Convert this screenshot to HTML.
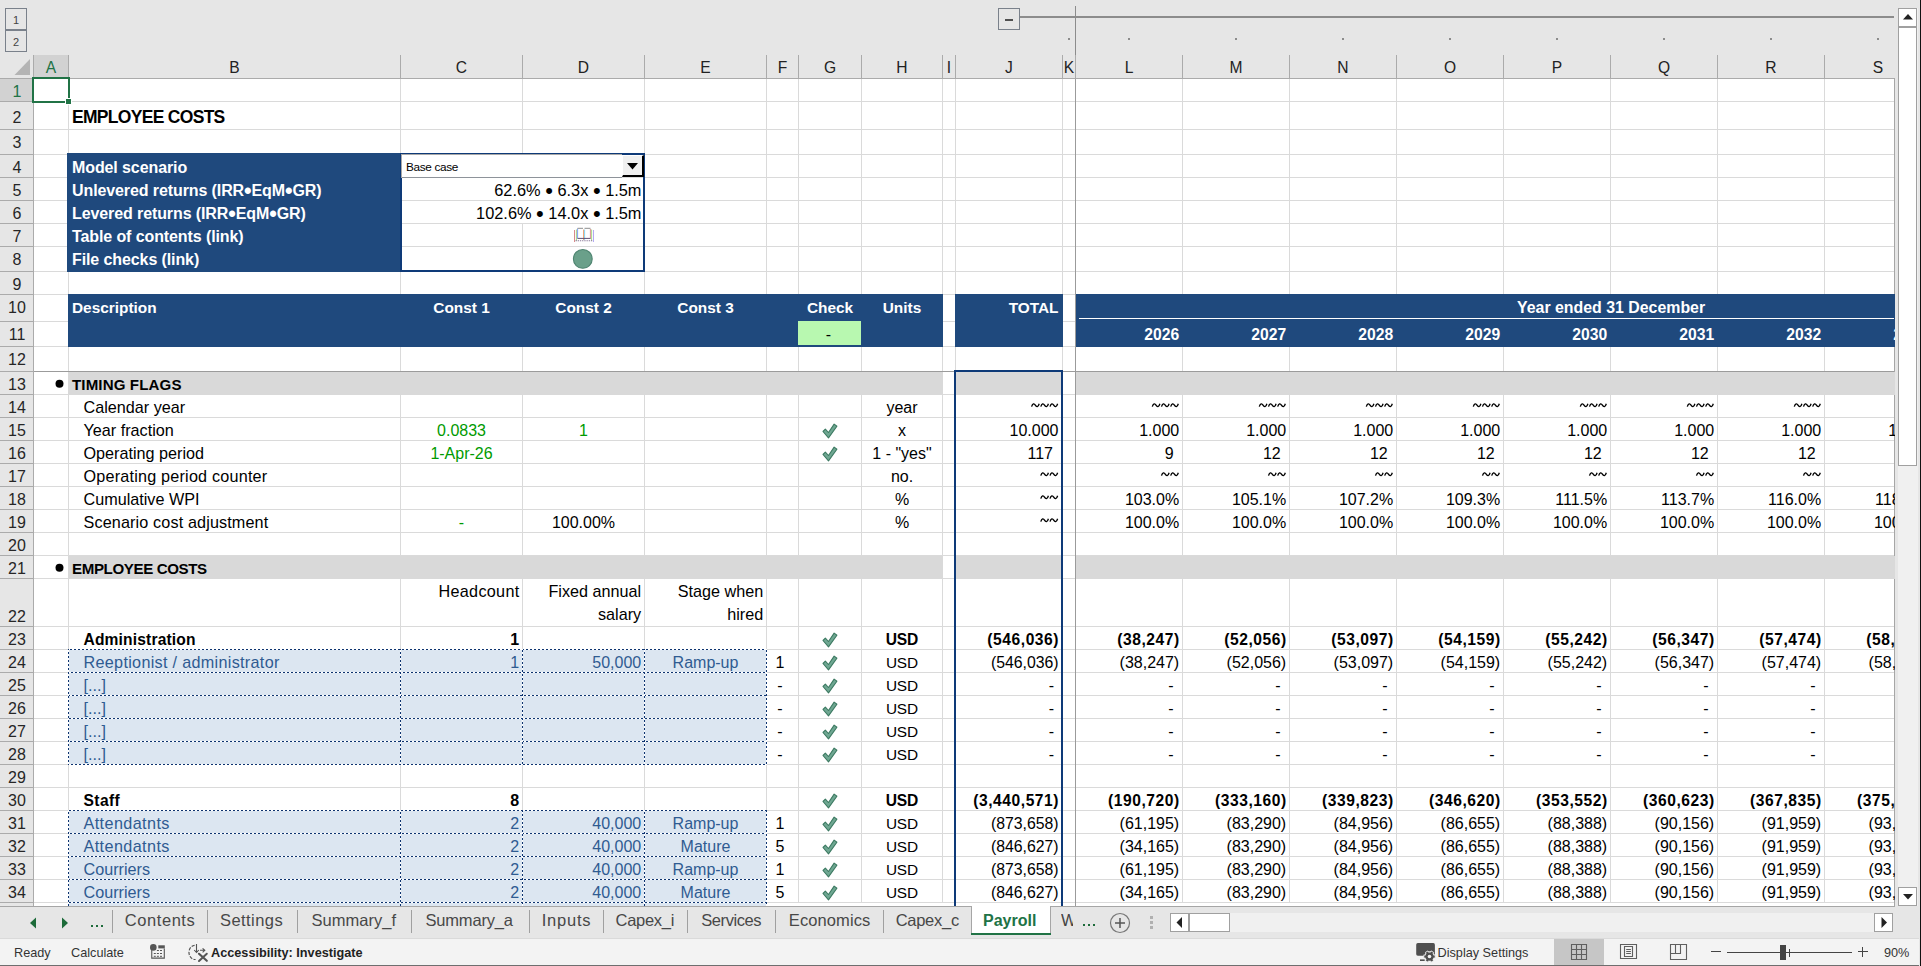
<!DOCTYPE html><html><head><meta charset="utf-8"><style>
html,body{margin:0;padding:0;}body{width:1921px;height:966px;overflow:hidden;position:relative;background:#E6E6E6;font-family:"Liberation Sans", sans-serif;}
div{position:absolute;box-sizing:border-box;}
.t{white-space:pre;}
</style></head><body>
<div style="left:5px;top:8px;width:22px;height:22px;border:1px solid #7A818B;"></div>
<div class="t" style="left:-284px;width:600px;text-align:center;top:14px;font-size:11px;line-height:13px;font-weight:400;color:#444;">1</div>
<div style="left:5px;top:30px;width:22px;height:22px;border:1px solid #7A818B;"></div>
<div class="t" style="left:-284px;width:600px;text-align:center;top:36px;font-size:11px;line-height:13px;font-weight:400;color:#444;">2</div>
<div style="left:5px;top:29px;width:22px;height:2px;background:#7A818B;"></div>
<div style="left:998px;top:8px;width:22px;height:22px;border:1px solid #7A818B;"></div>
<div style="left:1005px;top:19px;width:8px;height:2px;background:#505050;"></div>
<div style="left:1020px;top:16px;width:874px;height:2px;background:#8C8C8C;"></div>
<div style="left:1075px;top:6px;width:1px;height:49px;background:#8C8C8C;"></div>
<div style="left:1068px;top:38px;width:2px;height:2px;background:#8C8C8C;"></div>
<div style="left:1128px;top:38px;width:2px;height:2px;background:#8C8C8C;"></div>
<div style="left:1235px;top:38px;width:2px;height:2px;background:#8C8C8C;"></div>
<div style="left:1342px;top:38px;width:2px;height:2px;background:#8C8C8C;"></div>
<div style="left:1449px;top:38px;width:2px;height:2px;background:#8C8C8C;"></div>
<div style="left:1556px;top:38px;width:2px;height:2px;background:#8C8C8C;"></div>
<div style="left:1663px;top:38px;width:2px;height:2px;background:#8C8C8C;"></div>
<div style="left:1770px;top:38px;width:2px;height:2px;background:#8C8C8C;"></div>
<div style="left:1877px;top:38px;width:2px;height:2px;background:#8C8C8C;"></div>
<div style="left:0px;top:55px;width:1894px;height:24px;background:#E6E6E6;"></div>
<svg style="position:absolute;left:0;top:55px" width="33" height="23"><polygon points="14.5,20 30,4 30,20" fill="#B4B4B4"/></svg>
<div style="left:34px;top:55px;width:35px;height:23px;background:#D2D2D2;"></div>
<div style="left:68px;top:55px;width:1px;height:23px;background:#ABABAB;"></div>
<div class="t" style="left:-249.0px;width:600px;text-align:center;top:58px;font-size:15.6px;line-height:19px;font-weight:400;color:#217346;">A</div>
<div style="left:400px;top:55px;width:1px;height:23px;background:#ABABAB;"></div>
<div class="t" style="left:-65.5px;width:600px;text-align:center;top:58px;font-size:15.6px;line-height:19px;font-weight:400;color:#222;">B</div>
<div style="left:522px;top:55px;width:1px;height:23px;background:#ABABAB;"></div>
<div class="t" style="left:161.5px;width:600px;text-align:center;top:58px;font-size:15.6px;line-height:19px;font-weight:400;color:#222;">C</div>
<div style="left:644px;top:55px;width:1px;height:23px;background:#ABABAB;"></div>
<div class="t" style="left:283.5px;width:600px;text-align:center;top:58px;font-size:15.6px;line-height:19px;font-weight:400;color:#222;">D</div>
<div style="left:766px;top:55px;width:1px;height:23px;background:#ABABAB;"></div>
<div class="t" style="left:405.5px;width:600px;text-align:center;top:58px;font-size:15.6px;line-height:19px;font-weight:400;color:#222;">E</div>
<div style="left:798px;top:55px;width:1px;height:23px;background:#ABABAB;"></div>
<div class="t" style="left:482.5px;width:600px;text-align:center;top:58px;font-size:15.6px;line-height:19px;font-weight:400;color:#222;">F</div>
<div style="left:861px;top:55px;width:1px;height:23px;background:#ABABAB;"></div>
<div class="t" style="left:530.0px;width:600px;text-align:center;top:58px;font-size:15.6px;line-height:19px;font-weight:400;color:#222;">G</div>
<div style="left:942px;top:55px;width:1px;height:23px;background:#ABABAB;"></div>
<div class="t" style="left:602.0px;width:600px;text-align:center;top:58px;font-size:15.6px;line-height:19px;font-weight:400;color:#222;">H</div>
<div style="left:955px;top:55px;width:1px;height:23px;background:#ABABAB;"></div>
<div class="t" style="left:649.0px;width:600px;text-align:center;top:58px;font-size:15.6px;line-height:19px;font-weight:400;color:#222;">I</div>
<div style="left:1062px;top:55px;width:1px;height:23px;background:#ABABAB;"></div>
<div class="t" style="left:709.0px;width:600px;text-align:center;top:58px;font-size:15.6px;line-height:19px;font-weight:400;color:#222;">J</div>
<div style="left:1075px;top:55px;width:1px;height:23px;background:#ABABAB;"></div>
<div class="t" style="left:769.0px;width:600px;text-align:center;top:58px;font-size:15.6px;line-height:19px;font-weight:400;color:#222;">K</div>
<div style="left:1182px;top:55px;width:1px;height:23px;background:#ABABAB;"></div>
<div class="t" style="left:829.0px;width:600px;text-align:center;top:58px;font-size:15.6px;line-height:19px;font-weight:400;color:#222;">L</div>
<div style="left:1289px;top:55px;width:1px;height:23px;background:#ABABAB;"></div>
<div class="t" style="left:936.0px;width:600px;text-align:center;top:58px;font-size:15.6px;line-height:19px;font-weight:400;color:#222;">M</div>
<div style="left:1396px;top:55px;width:1px;height:23px;background:#ABABAB;"></div>
<div class="t" style="left:1043.0px;width:600px;text-align:center;top:58px;font-size:15.6px;line-height:19px;font-weight:400;color:#222;">N</div>
<div style="left:1503px;top:55px;width:1px;height:23px;background:#ABABAB;"></div>
<div class="t" style="left:1150.0px;width:600px;text-align:center;top:58px;font-size:15.6px;line-height:19px;font-weight:400;color:#222;">O</div>
<div style="left:1610px;top:55px;width:1px;height:23px;background:#ABABAB;"></div>
<div class="t" style="left:1257.0px;width:600px;text-align:center;top:58px;font-size:15.6px;line-height:19px;font-weight:400;color:#222;">P</div>
<div style="left:1717px;top:55px;width:1px;height:23px;background:#ABABAB;"></div>
<div class="t" style="left:1364.0px;width:600px;text-align:center;top:58px;font-size:15.6px;line-height:19px;font-weight:400;color:#222;">Q</div>
<div style="left:1824px;top:55px;width:1px;height:23px;background:#ABABAB;"></div>
<div class="t" style="left:1471.0px;width:600px;text-align:center;top:58px;font-size:15.6px;line-height:19px;font-weight:400;color:#222;">R</div>
<div style="left:1931px;top:55px;width:1px;height:23px;background:#ABABAB;"></div>
<div class="t" style="left:1578.0px;width:600px;text-align:center;top:58px;font-size:15.6px;line-height:19px;font-weight:400;color:#222;">S</div>
<div style="left:33px;top:55px;width:1px;height:23px;background:#ABABAB;"></div>
<div style="left:0px;top:78px;width:1894px;height:1px;background:#ABABAB;"></div>
<div style="left:0px;top:79px;width:33px;height:827px;background:#E6E6E6;"></div>
<div style="left:0px;top:79px;width:33px;height:22px;background:#D2D2D2;"></div>
<div style="left:0px;top:101px;width:33px;height:1px;background:#ABABAB;"></div>
<div class="t" style="left:-283px;width:600px;text-align:center;top:82px;font-size:16px;line-height:19px;font-weight:400;color:#217346;">1</div>
<div style="left:0px;top:129px;width:33px;height:1px;background:#ABABAB;"></div>
<div class="t" style="left:-283px;width:600px;text-align:center;top:108px;font-size:16px;line-height:19px;font-weight:400;color:#262626;">2</div>
<div style="left:0px;top:154px;width:33px;height:1px;background:#ABABAB;"></div>
<div class="t" style="left:-283px;width:600px;text-align:center;top:133px;font-size:16px;line-height:19px;font-weight:400;color:#262626;">3</div>
<div style="left:0px;top:177px;width:33px;height:1px;background:#ABABAB;"></div>
<div class="t" style="left:-283px;width:600px;text-align:center;top:158px;font-size:16px;line-height:19px;font-weight:400;color:#262626;">4</div>
<div style="left:0px;top:200px;width:33px;height:1px;background:#ABABAB;"></div>
<div class="t" style="left:-283px;width:600px;text-align:center;top:181px;font-size:16px;line-height:19px;font-weight:400;color:#262626;">5</div>
<div style="left:0px;top:223px;width:33px;height:1px;background:#ABABAB;"></div>
<div class="t" style="left:-283px;width:600px;text-align:center;top:204px;font-size:16px;line-height:19px;font-weight:400;color:#262626;">6</div>
<div style="left:0px;top:246px;width:33px;height:1px;background:#ABABAB;"></div>
<div class="t" style="left:-283px;width:600px;text-align:center;top:227px;font-size:16px;line-height:19px;font-weight:400;color:#262626;">7</div>
<div style="left:0px;top:271px;width:33px;height:1px;background:#ABABAB;"></div>
<div class="t" style="left:-283px;width:600px;text-align:center;top:250px;font-size:16px;line-height:19px;font-weight:400;color:#262626;">8</div>
<div style="left:0px;top:294px;width:33px;height:1px;background:#ABABAB;"></div>
<div class="t" style="left:-283px;width:600px;text-align:center;top:275px;font-size:16px;line-height:19px;font-weight:400;color:#262626;">9</div>
<div style="left:0px;top:321px;width:33px;height:1px;background:#ABABAB;"></div>
<div class="t" style="left:-283px;width:600px;text-align:center;top:298px;font-size:16px;line-height:19px;font-weight:400;color:#262626;">10</div>
<div style="left:0px;top:346px;width:33px;height:1px;background:#ABABAB;"></div>
<div class="t" style="left:-283px;width:600px;text-align:center;top:325px;font-size:16px;line-height:19px;font-weight:400;color:#262626;">11</div>
<div style="left:0px;top:371px;width:33px;height:1px;background:#ABABAB;"></div>
<div class="t" style="left:-283px;width:600px;text-align:center;top:350px;font-size:16px;line-height:19px;font-weight:400;color:#262626;">12</div>
<div style="left:0px;top:394px;width:33px;height:1px;background:#ABABAB;"></div>
<div class="t" style="left:-283px;width:600px;text-align:center;top:375px;font-size:16px;line-height:19px;font-weight:400;color:#262626;">13</div>
<div style="left:0px;top:417px;width:33px;height:1px;background:#ABABAB;"></div>
<div class="t" style="left:-283px;width:600px;text-align:center;top:398px;font-size:16px;line-height:19px;font-weight:400;color:#262626;">14</div>
<div style="left:0px;top:440px;width:33px;height:1px;background:#ABABAB;"></div>
<div class="t" style="left:-283px;width:600px;text-align:center;top:421px;font-size:16px;line-height:19px;font-weight:400;color:#262626;">15</div>
<div style="left:0px;top:463px;width:33px;height:1px;background:#ABABAB;"></div>
<div class="t" style="left:-283px;width:600px;text-align:center;top:444px;font-size:16px;line-height:19px;font-weight:400;color:#262626;">16</div>
<div style="left:0px;top:486px;width:33px;height:1px;background:#ABABAB;"></div>
<div class="t" style="left:-283px;width:600px;text-align:center;top:467px;font-size:16px;line-height:19px;font-weight:400;color:#262626;">17</div>
<div style="left:0px;top:509px;width:33px;height:1px;background:#ABABAB;"></div>
<div class="t" style="left:-283px;width:600px;text-align:center;top:490px;font-size:16px;line-height:19px;font-weight:400;color:#262626;">18</div>
<div style="left:0px;top:532px;width:33px;height:1px;background:#ABABAB;"></div>
<div class="t" style="left:-283px;width:600px;text-align:center;top:513px;font-size:16px;line-height:19px;font-weight:400;color:#262626;">19</div>
<div style="left:0px;top:555px;width:33px;height:1px;background:#ABABAB;"></div>
<div class="t" style="left:-283px;width:600px;text-align:center;top:536px;font-size:16px;line-height:19px;font-weight:400;color:#262626;">20</div>
<div style="left:0px;top:578px;width:33px;height:1px;background:#ABABAB;"></div>
<div class="t" style="left:-283px;width:600px;text-align:center;top:559px;font-size:16px;line-height:19px;font-weight:400;color:#262626;">21</div>
<div style="left:0px;top:626px;width:33px;height:1px;background:#ABABAB;"></div>
<div class="t" style="left:-283px;width:600px;text-align:center;top:607px;font-size:16px;line-height:19px;font-weight:400;color:#262626;">22</div>
<div style="left:0px;top:649px;width:33px;height:1px;background:#ABABAB;"></div>
<div class="t" style="left:-283px;width:600px;text-align:center;top:630px;font-size:16px;line-height:19px;font-weight:400;color:#262626;">23</div>
<div style="left:0px;top:672px;width:33px;height:1px;background:#ABABAB;"></div>
<div class="t" style="left:-283px;width:600px;text-align:center;top:653px;font-size:16px;line-height:19px;font-weight:400;color:#262626;">24</div>
<div style="left:0px;top:695px;width:33px;height:1px;background:#ABABAB;"></div>
<div class="t" style="left:-283px;width:600px;text-align:center;top:676px;font-size:16px;line-height:19px;font-weight:400;color:#262626;">25</div>
<div style="left:0px;top:718px;width:33px;height:1px;background:#ABABAB;"></div>
<div class="t" style="left:-283px;width:600px;text-align:center;top:699px;font-size:16px;line-height:19px;font-weight:400;color:#262626;">26</div>
<div style="left:0px;top:741px;width:33px;height:1px;background:#ABABAB;"></div>
<div class="t" style="left:-283px;width:600px;text-align:center;top:722px;font-size:16px;line-height:19px;font-weight:400;color:#262626;">27</div>
<div style="left:0px;top:764px;width:33px;height:1px;background:#ABABAB;"></div>
<div class="t" style="left:-283px;width:600px;text-align:center;top:745px;font-size:16px;line-height:19px;font-weight:400;color:#262626;">28</div>
<div style="left:0px;top:787px;width:33px;height:1px;background:#ABABAB;"></div>
<div class="t" style="left:-283px;width:600px;text-align:center;top:768px;font-size:16px;line-height:19px;font-weight:400;color:#262626;">29</div>
<div style="left:0px;top:810px;width:33px;height:1px;background:#ABABAB;"></div>
<div class="t" style="left:-283px;width:600px;text-align:center;top:791px;font-size:16px;line-height:19px;font-weight:400;color:#262626;">30</div>
<div style="left:0px;top:833px;width:33px;height:1px;background:#ABABAB;"></div>
<div class="t" style="left:-283px;width:600px;text-align:center;top:814px;font-size:16px;line-height:19px;font-weight:400;color:#262626;">31</div>
<div style="left:0px;top:856px;width:33px;height:1px;background:#ABABAB;"></div>
<div class="t" style="left:-283px;width:600px;text-align:center;top:837px;font-size:16px;line-height:19px;font-weight:400;color:#262626;">32</div>
<div style="left:0px;top:879px;width:33px;height:1px;background:#ABABAB;"></div>
<div class="t" style="left:-283px;width:600px;text-align:center;top:860px;font-size:16px;line-height:19px;font-weight:400;color:#262626;">33</div>
<div style="left:0px;top:902px;width:33px;height:1px;background:#ABABAB;"></div>
<div class="t" style="left:-283px;width:600px;text-align:center;top:883px;font-size:16px;line-height:19px;font-weight:400;color:#262626;">34</div>
<div style="left:33px;top:55px;width:1px;height:851px;background:#ABABAB;"></div>
<div style="left:34px;top:79px;width:1860px;height:827px;background:#FFFFFF;"></div>
<div style="left:68px;top:79px;width:1px;height:827px;background:#DADADA;"></div>
<div style="left:400px;top:79px;width:1px;height:827px;background:#DADADA;"></div>
<div style="left:522px;top:79px;width:1px;height:827px;background:#DADADA;"></div>
<div style="left:644px;top:79px;width:1px;height:827px;background:#DADADA;"></div>
<div style="left:766px;top:79px;width:1px;height:827px;background:#DADADA;"></div>
<div style="left:798px;top:79px;width:1px;height:827px;background:#DADADA;"></div>
<div style="left:861px;top:79px;width:1px;height:827px;background:#DADADA;"></div>
<div style="left:942px;top:79px;width:1px;height:827px;background:#DADADA;"></div>
<div style="left:955px;top:79px;width:1px;height:827px;background:#DADADA;"></div>
<div style="left:1062px;top:79px;width:1px;height:827px;background:#DADADA;"></div>
<div style="left:1075px;top:79px;width:1px;height:827px;background:#DADADA;"></div>
<div style="left:1182px;top:79px;width:1px;height:827px;background:#DADADA;"></div>
<div style="left:1289px;top:79px;width:1px;height:827px;background:#DADADA;"></div>
<div style="left:1396px;top:79px;width:1px;height:827px;background:#DADADA;"></div>
<div style="left:1503px;top:79px;width:1px;height:827px;background:#DADADA;"></div>
<div style="left:1610px;top:79px;width:1px;height:827px;background:#DADADA;"></div>
<div style="left:1717px;top:79px;width:1px;height:827px;background:#DADADA;"></div>
<div style="left:1824px;top:79px;width:1px;height:827px;background:#DADADA;"></div>
<div style="left:34px;top:101px;width:1860px;height:1px;background:#DADADA;"></div>
<div style="left:34px;top:129px;width:1860px;height:1px;background:#DADADA;"></div>
<div style="left:34px;top:154px;width:1860px;height:1px;background:#DADADA;"></div>
<div style="left:34px;top:177px;width:1860px;height:1px;background:#DADADA;"></div>
<div style="left:34px;top:200px;width:1860px;height:1px;background:#DADADA;"></div>
<div style="left:34px;top:223px;width:1860px;height:1px;background:#DADADA;"></div>
<div style="left:34px;top:246px;width:1860px;height:1px;background:#DADADA;"></div>
<div style="left:34px;top:271px;width:1860px;height:1px;background:#DADADA;"></div>
<div style="left:34px;top:294px;width:1860px;height:1px;background:#DADADA;"></div>
<div style="left:34px;top:321px;width:1860px;height:1px;background:#DADADA;"></div>
<div style="left:34px;top:346px;width:1860px;height:1px;background:#DADADA;"></div>
<div style="left:34px;top:371px;width:1860px;height:1px;background:#DADADA;"></div>
<div style="left:34px;top:394px;width:1860px;height:1px;background:#DADADA;"></div>
<div style="left:34px;top:417px;width:1860px;height:1px;background:#DADADA;"></div>
<div style="left:34px;top:440px;width:1860px;height:1px;background:#DADADA;"></div>
<div style="left:34px;top:463px;width:1860px;height:1px;background:#DADADA;"></div>
<div style="left:34px;top:486px;width:1860px;height:1px;background:#DADADA;"></div>
<div style="left:34px;top:509px;width:1860px;height:1px;background:#DADADA;"></div>
<div style="left:34px;top:532px;width:1860px;height:1px;background:#DADADA;"></div>
<div style="left:34px;top:555px;width:1860px;height:1px;background:#DADADA;"></div>
<div style="left:34px;top:578px;width:1860px;height:1px;background:#DADADA;"></div>
<div style="left:34px;top:626px;width:1860px;height:1px;background:#DADADA;"></div>
<div style="left:34px;top:649px;width:1860px;height:1px;background:#DADADA;"></div>
<div style="left:34px;top:672px;width:1860px;height:1px;background:#DADADA;"></div>
<div style="left:34px;top:695px;width:1860px;height:1px;background:#DADADA;"></div>
<div style="left:34px;top:718px;width:1860px;height:1px;background:#DADADA;"></div>
<div style="left:34px;top:741px;width:1860px;height:1px;background:#DADADA;"></div>
<div style="left:34px;top:764px;width:1860px;height:1px;background:#DADADA;"></div>
<div style="left:34px;top:787px;width:1860px;height:1px;background:#DADADA;"></div>
<div style="left:34px;top:810px;width:1860px;height:1px;background:#DADADA;"></div>
<div style="left:34px;top:833px;width:1860px;height:1px;background:#DADADA;"></div>
<div style="left:34px;top:856px;width:1860px;height:1px;background:#DADADA;"></div>
<div style="left:34px;top:879px;width:1860px;height:1px;background:#DADADA;"></div>
<div style="left:34px;top:902px;width:1860px;height:1px;background:#DADADA;"></div>
<div style="left:34px;top:903px;width:1860px;height:3px;background:#FFFFFF;"></div>
<div style="left:1894px;top:78px;width:1px;height:829px;background:#A6A6A6;"></div>
<div style="left:0px;top:906px;width:1894px;height:1px;background:#A6A6A6;"></div>
<!--CELLS-->
<div class="t" style="left:72px;top:107px;font-size:17.5px;line-height:21px;font-weight:700;color:#000;letter-spacing:-0.7px;">EMPLOYEE COSTS</div>
<div style="left:67px;top:153px;width:334px;height:119px;background:#1F497D;"></div>
<div class="t" style="left:72px;top:157.5px;font-size:16px;line-height:19px;font-weight:700;color:#FFF;letter-spacing:-0.1px;">Model scenario</div>
<div class="t" style="left:72px;top:180.5px;font-size:16px;line-height:19px;font-weight:700;color:#FFF;letter-spacing:-0.1px;">Unlevered returns (IRR<span style="font-size:1.35em;line-height:0;vertical-align:-0.08em">•</span>EqM<span style="font-size:1.35em;line-height:0;vertical-align:-0.08em">•</span>GR)</div>
<div class="t" style="left:72px;top:203.5px;font-size:16px;line-height:19px;font-weight:700;color:#FFF;letter-spacing:-0.1px;">Levered returns (IRR<span style="font-size:1.35em;line-height:0;vertical-align:-0.08em">•</span>EqM<span style="font-size:1.35em;line-height:0;vertical-align:-0.08em">•</span>GR)</div>
<div class="t" style="left:72px;top:226.5px;font-size:16px;line-height:19px;font-weight:700;color:#FFF;letter-spacing:-0.1px;">Table of contents (link)</div>
<div class="t" style="left:72px;top:250px;font-size:16px;line-height:19px;font-weight:700;color:#FFF;letter-spacing:-0.1px;">File checks (link)</div>
<div style="left:401px;top:154px;width:243px;height:117px;background:#FFFFFF;"></div>
<div style="left:401px;top:177px;width:243px;height:1px;background:#DADADA;"></div>
<div style="left:401px;top:200px;width:243px;height:1px;background:#DADADA;"></div>
<div style="left:401px;top:223px;width:243px;height:1px;background:#DADADA;"></div>
<div style="left:401px;top:246px;width:243px;height:1px;background:#DADADA;"></div>
<div style="left:522px;top:224px;width:1px;height:47px;background:#DADADA;"></div>
<div style="left:400px;top:153px;width:245px;height:119px;border:2px solid #0E3A78;"></div>
<div style="left:401px;top:177px;width:221px;height:1px;background:#8E939A;"></div>
<div style="left:401px;top:154px;width:221px;height:1px;background:#A8A8A8;"></div>
<div style="left:401px;top:154px;width:1px;height:24px;background:#A8A8A8;"></div>
<div style="left:622px;top:155px;width:22px;height:22px;background:#F0F0F0;border-top:1px solid #FFF;border-left:1px solid #FFF;border-right:2px solid #000;border-bottom:2px solid #000;"></div>
<svg style="position:absolute;left:627px;top:163px" width="12" height="8"><polygon points="0,0 11,0 5.5,6.5" fill="#000"/></svg>
<div class="t" style="left:406px;top:160px;font-size:11.8px;line-height:14px;font-weight:400;color:#000;letter-spacing:-0.35px;">Base case</div>
<div class="t" style="left:41.5px;width:600px;text-align:right;top:180px;font-size:16.35px;line-height:20px;font-weight:400;color:#000;">62.6% <span style="font-size:1.35em;line-height:0;vertical-align:-0.08em">•</span> 6.3x <span style="font-size:1.35em;line-height:0;vertical-align:-0.08em">•</span> 1.5m</div>
<div class="t" style="left:41.5px;width:600px;text-align:right;top:203px;font-size:16.35px;line-height:20px;font-weight:400;color:#000;">102.6% <span style="font-size:1.35em;line-height:0;vertical-align:-0.08em">•</span> 14.0x <span style="font-size:1.35em;line-height:0;vertical-align:-0.08em">•</span> 1.5m</div>
<svg style="position:absolute;left:568px;top:224px" width="30" height="22" viewBox="0 0 30 22"><path d="M6.5 6 V18" stroke="#D98A8A" stroke-width="1"/><path d="M8.4 5.5 V17" stroke="#A9CF86" stroke-width="1"/><path d="M9.6 4.5 V14.5" stroke="#7FA0F5" stroke-width="1"/><path d="M9.5 4.3 H15" stroke="#8C8C8C" stroke-width="1"/><path d="M16.5 4.3 H22.5" stroke="#8C8C8C" stroke-width="1"/><path d="M15.5 5.5 V16" stroke="#F2A878" stroke-width="1"/><path d="M16.6 5.5 V16" stroke="#7FD6F5" stroke-width="1"/><path d="M22.4 5 V14.5" stroke="#DF8E96" stroke-width="1"/><path d="M23.6 5.5 V17" stroke="#A9D98C" stroke-width="1"/><path d="M25.5 6 V18" stroke="#B5AAF5" stroke-width="1"/><path d="M9.5 14.4 H22.5" stroke="#5E4F70" stroke-width="1"/><path d="M7.5 16.8 H24.5" stroke="#8A7A9A" stroke-width="1.1" stroke-dasharray="1.3 0.9"/></svg>
<svg style="position:absolute;left:572px;top:248px" width="22" height="22"><circle cx="10.8" cy="10.9" r="9.4" fill="#6AA08A" stroke="#4E8470" stroke-width="1.1"/></svg>
<div style="left:68px;top:294px;width:875px;height:53px;background:#1F497D;"></div>
<div style="left:955px;top:294px;width:108px;height:53px;background:#1F497D;"></div>
<div style="left:1076px;top:294px;width:819px;height:53px;background:#1F497D;"></div>
<div style="left:1079px;top:318px;width:815px;height:1px;background:#FFFFFF;"></div>
<div class="t" style="left:72px;top:299px;font-size:15.4px;line-height:18px;font-weight:700;color:#FFF;">Description</div>
<div class="t" style="left:161.5px;width:600px;text-align:center;top:299px;font-size:15.4px;line-height:18px;font-weight:700;color:#FFF;">Const 1</div>
<div class="t" style="left:283.5px;width:600px;text-align:center;top:299px;font-size:15.4px;line-height:18px;font-weight:700;color:#FFF;">Const 2</div>
<div class="t" style="left:405.5px;width:600px;text-align:center;top:299px;font-size:15.4px;line-height:18px;font-weight:700;color:#FFF;">Const 3</div>
<div class="t" style="left:530.0px;width:600px;text-align:center;top:299px;font-size:15.4px;line-height:18px;font-weight:700;color:#FFF;">Check</div>
<div class="t" style="left:602.0px;width:600px;text-align:center;top:299px;font-size:15.4px;line-height:18px;font-weight:700;color:#FFF;">Units</div>
<div class="t" style="left:458.5px;width:600px;text-align:right;top:299px;font-size:15.4px;line-height:18px;font-weight:700;color:#FFF;">TOTAL</div>
<div class="t" style="left:1517px;top:298px;font-size:15.9px;line-height:19px;font-weight:700;color:#FFF;">Year ended 31 December</div>
<div class="t" style="left:579.2px;width:600px;text-align:right;top:325px;font-size:15.7px;line-height:19px;font-weight:700;color:#FFF;">2026</div>
<div class="t" style="left:686.2px;width:600px;text-align:right;top:325px;font-size:15.7px;line-height:19px;font-weight:700;color:#FFF;">2027</div>
<div class="t" style="left:793.2px;width:600px;text-align:right;top:325px;font-size:15.7px;line-height:19px;font-weight:700;color:#FFF;">2028</div>
<div class="t" style="left:900.2px;width:600px;text-align:right;top:325px;font-size:15.7px;line-height:19px;font-weight:700;color:#FFF;">2029</div>
<div class="t" style="left:1007.2px;width:600px;text-align:right;top:325px;font-size:15.7px;line-height:19px;font-weight:700;color:#FFF;">2030</div>
<div class="t" style="left:1114.2px;width:600px;text-align:right;top:325px;font-size:15.7px;line-height:19px;font-weight:700;color:#FFF;">2031</div>
<div class="t" style="left:1221.2px;width:600px;text-align:right;top:325px;font-size:15.7px;line-height:19px;font-weight:700;color:#FFF;">2032</div>
<div class="t" style="left:1328.2px;width:600px;text-align:right;top:325px;font-size:15.7px;line-height:19px;font-weight:700;color:#FFF;">2033</div>
<div style="left:798px;top:321px;width:63px;height:24px;background:#B8F8B0;"></div>
<div class="t" style="left:528.4px;width:600px;text-align:center;top:325px;font-size:16px;line-height:19px;font-weight:400;color:#000;">-</div>
<div style="left:68px;top:372px;width:875px;height:23px;background:#D9D9D9;"></div>
<div style="left:955px;top:372px;width:108px;height:23px;background:#D9D9D9;"></div>
<div style="left:1076px;top:372px;width:819px;height:23px;background:#D9D9D9;"></div>
<div style="left:68px;top:556px;width:875px;height:23px;background:#D9D9D9;"></div>
<div style="left:955px;top:556px;width:108px;height:23px;background:#D9D9D9;"></div>
<div style="left:1076px;top:556px;width:819px;height:23px;background:#D9D9D9;"></div>
<div class="t" style="left:72px;top:376px;font-size:15.1px;line-height:18px;font-weight:700;color:#000;letter-spacing:0.12px;">TIMING FLAGS</div>
<div class="t" style="left:72px;top:560px;font-size:15.1px;line-height:18px;font-weight:700;color:#000;letter-spacing:-0.38px;">EMPLOYEE COSTS</div>
<svg style="position:absolute;left:55px;top:379px" width="10" height="10"><circle cx="4.5" cy="4.8" r="4" fill="#000"/></svg>
<svg style="position:absolute;left:55px;top:563px" width="10" height="10"><circle cx="4.5" cy="4.8" r="4" fill="#000"/></svg>
<div style="left:34px;top:371px;width:1860px;height:1px;background:#9B9B9B;"></div>
<div style="left:1075px;top:79px;width:1px;height:827px;background:#9B9B9B;"></div>
<div style="left:954px;top:370px;width:2px;height:536px;background:#0E3A78;"></div>
<div style="left:1061px;top:370px;width:2px;height:536px;background:#0E3A78;"></div>
<div style="left:954px;top:370px;width:109px;height:2px;background:#0E3A78;"></div>
<div class="t" style="left:83.5px;top:398px;font-size:16.2px;line-height:19px;font-weight:400;color:#000;">Calendar year</div>
<div class="t" style="left:83.5px;top:421px;font-size:16.2px;line-height:19px;font-weight:400;color:#000;">Year fraction</div>
<div class="t" style="left:83.5px;top:444px;font-size:16.2px;line-height:19px;font-weight:400;color:#000;">Operating period</div>
<div class="t" style="left:83.5px;top:467px;font-size:16.2px;line-height:19px;font-weight:400;color:#000;letter-spacing:0.2px;">Operating period counter</div>
<div class="t" style="left:83.5px;top:490px;font-size:16.2px;line-height:19px;font-weight:400;color:#000;">Cumulative WPI</div>
<div class="t" style="left:83.5px;top:513px;font-size:16.2px;line-height:19px;font-weight:400;color:#000;letter-spacing:0.13px;">Scenario cost adjustment</div>
<div class="t" style="left:161.5px;width:600px;text-align:center;top:421px;font-size:16px;line-height:19px;font-weight:400;color:#009A00;">0.0833</div>
<div class="t" style="left:161.5px;width:600px;text-align:center;top:444px;font-size:16px;line-height:19px;font-weight:400;color:#009A00;">1-Apr-26</div>
<div class="t" style="left:161.5px;width:600px;text-align:center;top:513px;font-size:16px;line-height:19px;font-weight:400;color:#009A00;">-</div>
<div class="t" style="left:283.5px;width:600px;text-align:center;top:421px;font-size:16px;line-height:19px;font-weight:400;color:#009A00;">1</div>
<div class="t" style="left:283.5px;width:600px;text-align:center;top:513px;font-size:16px;line-height:19px;font-weight:400;color:#000;">100.00%</div>
<div class="t" style="left:602.0px;width:600px;text-align:center;top:398px;font-size:16px;line-height:19px;font-weight:400;color:#000;">year</div>
<div class="t" style="left:602.0px;width:600px;text-align:center;top:421px;font-size:16px;line-height:19px;font-weight:400;color:#000;">x</div>
<div class="t" style="left:602.0px;width:600px;text-align:center;top:444px;font-size:16px;line-height:19px;font-weight:400;color:#000;">1 - "yes"</div>
<div class="t" style="left:602.0px;width:600px;text-align:center;top:467px;font-size:16px;line-height:19px;font-weight:400;color:#000;">no.</div>
<div class="t" style="left:602.0px;width:600px;text-align:center;top:490px;font-size:16px;line-height:19px;font-weight:400;color:#000;">%</div>
<div class="t" style="left:602.0px;width:600px;text-align:center;top:513px;font-size:16px;line-height:19px;font-weight:400;color:#000;">%</div>
<svg style="position:absolute;left:815px;top:417.6px" width="30" height="24" viewBox="0 0 30 24"><polygon points="8,13.5 10.35,11.1 13.5,14.5 19.15,6.1 21.9,8.3 13.5,19.9" fill="#6FA792" stroke="#3D7A62" stroke-width="1.1" stroke-linejoin="round"/></svg>
<svg style="position:absolute;left:815px;top:440.6px" width="30" height="24" viewBox="0 0 30 24"><polygon points="8,13.5 10.35,11.1 13.5,14.5 19.15,6.1 21.9,8.3 13.5,19.9" fill="#6FA792" stroke="#3D7A62" stroke-width="1.1" stroke-linejoin="round"/></svg>
<svg style="position:absolute;left:0;top:401.5px" width="1921" height="8"><path d="M1031.60 4.6 C1032.60 1.2 1034.20 1.2 1035.30 3.2 S1038.20 5.4 1039.20 1.8 M1040.80 4.6 C1041.80 1.2 1043.40 1.2 1044.50 3.2 S1047.40 5.4 1048.40 1.8 M1050.00 4.6 C1051.00 1.2 1052.60 1.2 1053.70 3.2 S1056.60 5.4 1057.60 1.8" fill="none" stroke="#000" stroke-width="1.35"/></svg>
<div class="t" style="left:458.5px;width:600px;text-align:right;top:421px;font-size:16px;line-height:19px;font-weight:400;color:#000;">10.000</div>
<div class="t" style="left:453px;width:600px;text-align:right;top:444px;font-size:16px;line-height:19px;font-weight:400;color:#000;">117</div>
<svg style="position:absolute;left:0;top:470.5px" width="1921" height="8"><path d="M1040.80 4.6 C1041.80 1.2 1043.40 1.2 1044.50 3.2 S1047.40 5.4 1048.40 1.8 M1050.00 4.6 C1051.00 1.2 1052.60 1.2 1053.70 3.2 S1056.60 5.4 1057.60 1.8" fill="none" stroke="#000" stroke-width="1.35"/></svg>
<svg style="position:absolute;left:0;top:493.5px" width="1921" height="8"><path d="M1040.80 4.6 C1041.80 1.2 1043.40 1.2 1044.50 3.2 S1047.40 5.4 1048.40 1.8 M1050.00 4.6 C1051.00 1.2 1052.60 1.2 1053.70 3.2 S1056.60 5.4 1057.60 1.8" fill="none" stroke="#000" stroke-width="1.35"/></svg>
<svg style="position:absolute;left:0;top:516.5px" width="1921" height="8"><path d="M1040.80 4.6 C1041.80 1.2 1043.40 1.2 1044.50 3.2 S1047.40 5.4 1048.40 1.8 M1050.00 4.6 C1051.00 1.2 1052.60 1.2 1053.70 3.2 S1056.60 5.4 1057.60 1.8" fill="none" stroke="#000" stroke-width="1.35"/></svg>
<svg style="position:absolute;left:0;top:401.5px" width="1921" height="8"><path d="M1152.30 4.6 C1153.30 1.2 1154.90 1.2 1156.00 3.2 S1158.90 5.4 1159.90 1.8 M1161.50 4.6 C1162.50 1.2 1164.10 1.2 1165.20 3.2 S1168.10 5.4 1169.10 1.8 M1170.70 4.6 C1171.70 1.2 1173.30 1.2 1174.40 3.2 S1177.30 5.4 1178.30 1.8" fill="none" stroke="#000" stroke-width="1.35"/></svg>
<div class="t" style="left:579.2px;width:600px;text-align:right;top:421px;font-size:16px;line-height:19px;font-weight:400;color:#000;">1.000</div>
<div class="t" style="left:573.7px;width:600px;text-align:right;top:444px;font-size:16px;line-height:19px;font-weight:400;color:#000;">9</div>
<svg style="position:absolute;left:0;top:470.5px" width="1921" height="8"><path d="M1161.50 4.6 C1162.50 1.2 1164.10 1.2 1165.20 3.2 S1168.10 5.4 1169.10 1.8 M1170.70 4.6 C1171.70 1.2 1173.30 1.2 1174.40 3.2 S1177.30 5.4 1178.30 1.8" fill="none" stroke="#000" stroke-width="1.35"/></svg>
<div class="t" style="left:579.2px;width:600px;text-align:right;top:490px;font-size:16px;line-height:19px;font-weight:400;color:#000;">103.0%</div>
<div class="t" style="left:579.2px;width:600px;text-align:right;top:513px;font-size:16px;line-height:19px;font-weight:400;color:#000;">100.0%</div>
<svg style="position:absolute;left:0;top:401.5px" width="1921" height="8"><path d="M1259.30 4.6 C1260.30 1.2 1261.90 1.2 1263.00 3.2 S1265.90 5.4 1266.90 1.8 M1268.50 4.6 C1269.50 1.2 1271.10 1.2 1272.20 3.2 S1275.10 5.4 1276.10 1.8 M1277.70 4.6 C1278.70 1.2 1280.30 1.2 1281.40 3.2 S1284.30 5.4 1285.30 1.8" fill="none" stroke="#000" stroke-width="1.35"/></svg>
<div class="t" style="left:686.2px;width:600px;text-align:right;top:421px;font-size:16px;line-height:19px;font-weight:400;color:#000;">1.000</div>
<div class="t" style="left:680.7px;width:600px;text-align:right;top:444px;font-size:16px;line-height:19px;font-weight:400;color:#000;">12</div>
<svg style="position:absolute;left:0;top:470.5px" width="1921" height="8"><path d="M1268.50 4.6 C1269.50 1.2 1271.10 1.2 1272.20 3.2 S1275.10 5.4 1276.10 1.8 M1277.70 4.6 C1278.70 1.2 1280.30 1.2 1281.40 3.2 S1284.30 5.4 1285.30 1.8" fill="none" stroke="#000" stroke-width="1.35"/></svg>
<div class="t" style="left:686.2px;width:600px;text-align:right;top:490px;font-size:16px;line-height:19px;font-weight:400;color:#000;">105.1%</div>
<div class="t" style="left:686.2px;width:600px;text-align:right;top:513px;font-size:16px;line-height:19px;font-weight:400;color:#000;">100.0%</div>
<svg style="position:absolute;left:0;top:401.5px" width="1921" height="8"><path d="M1366.30 4.6 C1367.30 1.2 1368.90 1.2 1370.00 3.2 S1372.90 5.4 1373.90 1.8 M1375.50 4.6 C1376.50 1.2 1378.10 1.2 1379.20 3.2 S1382.10 5.4 1383.10 1.8 M1384.70 4.6 C1385.70 1.2 1387.30 1.2 1388.40 3.2 S1391.30 5.4 1392.30 1.8" fill="none" stroke="#000" stroke-width="1.35"/></svg>
<div class="t" style="left:793.2px;width:600px;text-align:right;top:421px;font-size:16px;line-height:19px;font-weight:400;color:#000;">1.000</div>
<div class="t" style="left:787.7px;width:600px;text-align:right;top:444px;font-size:16px;line-height:19px;font-weight:400;color:#000;">12</div>
<svg style="position:absolute;left:0;top:470.5px" width="1921" height="8"><path d="M1375.50 4.6 C1376.50 1.2 1378.10 1.2 1379.20 3.2 S1382.10 5.4 1383.10 1.8 M1384.70 4.6 C1385.70 1.2 1387.30 1.2 1388.40 3.2 S1391.30 5.4 1392.30 1.8" fill="none" stroke="#000" stroke-width="1.35"/></svg>
<div class="t" style="left:793.2px;width:600px;text-align:right;top:490px;font-size:16px;line-height:19px;font-weight:400;color:#000;">107.2%</div>
<div class="t" style="left:793.2px;width:600px;text-align:right;top:513px;font-size:16px;line-height:19px;font-weight:400;color:#000;">100.0%</div>
<svg style="position:absolute;left:0;top:401.5px" width="1921" height="8"><path d="M1473.30 4.6 C1474.30 1.2 1475.90 1.2 1477.00 3.2 S1479.90 5.4 1480.90 1.8 M1482.50 4.6 C1483.50 1.2 1485.10 1.2 1486.20 3.2 S1489.10 5.4 1490.10 1.8 M1491.70 4.6 C1492.70 1.2 1494.30 1.2 1495.40 3.2 S1498.30 5.4 1499.30 1.8" fill="none" stroke="#000" stroke-width="1.35"/></svg>
<div class="t" style="left:900.2px;width:600px;text-align:right;top:421px;font-size:16px;line-height:19px;font-weight:400;color:#000;">1.000</div>
<div class="t" style="left:894.7px;width:600px;text-align:right;top:444px;font-size:16px;line-height:19px;font-weight:400;color:#000;">12</div>
<svg style="position:absolute;left:0;top:470.5px" width="1921" height="8"><path d="M1482.50 4.6 C1483.50 1.2 1485.10 1.2 1486.20 3.2 S1489.10 5.4 1490.10 1.8 M1491.70 4.6 C1492.70 1.2 1494.30 1.2 1495.40 3.2 S1498.30 5.4 1499.30 1.8" fill="none" stroke="#000" stroke-width="1.35"/></svg>
<div class="t" style="left:900.2px;width:600px;text-align:right;top:490px;font-size:16px;line-height:19px;font-weight:400;color:#000;">109.3%</div>
<div class="t" style="left:900.2px;width:600px;text-align:right;top:513px;font-size:16px;line-height:19px;font-weight:400;color:#000;">100.0%</div>
<svg style="position:absolute;left:0;top:401.5px" width="1921" height="8"><path d="M1580.30 4.6 C1581.30 1.2 1582.90 1.2 1584.00 3.2 S1586.90 5.4 1587.90 1.8 M1589.50 4.6 C1590.50 1.2 1592.10 1.2 1593.20 3.2 S1596.10 5.4 1597.10 1.8 M1598.70 4.6 C1599.70 1.2 1601.30 1.2 1602.40 3.2 S1605.30 5.4 1606.30 1.8" fill="none" stroke="#000" stroke-width="1.35"/></svg>
<div class="t" style="left:1007.2px;width:600px;text-align:right;top:421px;font-size:16px;line-height:19px;font-weight:400;color:#000;">1.000</div>
<div class="t" style="left:1001.7px;width:600px;text-align:right;top:444px;font-size:16px;line-height:19px;font-weight:400;color:#000;">12</div>
<svg style="position:absolute;left:0;top:470.5px" width="1921" height="8"><path d="M1589.50 4.6 C1590.50 1.2 1592.10 1.2 1593.20 3.2 S1596.10 5.4 1597.10 1.8 M1598.70 4.6 C1599.70 1.2 1601.30 1.2 1602.40 3.2 S1605.30 5.4 1606.30 1.8" fill="none" stroke="#000" stroke-width="1.35"/></svg>
<div class="t" style="left:1007.2px;width:600px;text-align:right;top:490px;font-size:16px;line-height:19px;font-weight:400;color:#000;">111.5%</div>
<div class="t" style="left:1007.2px;width:600px;text-align:right;top:513px;font-size:16px;line-height:19px;font-weight:400;color:#000;">100.0%</div>
<svg style="position:absolute;left:0;top:401.5px" width="1921" height="8"><path d="M1687.30 4.6 C1688.30 1.2 1689.90 1.2 1691.00 3.2 S1693.90 5.4 1694.90 1.8 M1696.50 4.6 C1697.50 1.2 1699.10 1.2 1700.20 3.2 S1703.10 5.4 1704.10 1.8 M1705.70 4.6 C1706.70 1.2 1708.30 1.2 1709.40 3.2 S1712.30 5.4 1713.30 1.8" fill="none" stroke="#000" stroke-width="1.35"/></svg>
<div class="t" style="left:1114.2px;width:600px;text-align:right;top:421px;font-size:16px;line-height:19px;font-weight:400;color:#000;">1.000</div>
<div class="t" style="left:1108.7px;width:600px;text-align:right;top:444px;font-size:16px;line-height:19px;font-weight:400;color:#000;">12</div>
<svg style="position:absolute;left:0;top:470.5px" width="1921" height="8"><path d="M1696.50 4.6 C1697.50 1.2 1699.10 1.2 1700.20 3.2 S1703.10 5.4 1704.10 1.8 M1705.70 4.6 C1706.70 1.2 1708.30 1.2 1709.40 3.2 S1712.30 5.4 1713.30 1.8" fill="none" stroke="#000" stroke-width="1.35"/></svg>
<div class="t" style="left:1114.2px;width:600px;text-align:right;top:490px;font-size:16px;line-height:19px;font-weight:400;color:#000;">113.7%</div>
<div class="t" style="left:1114.2px;width:600px;text-align:right;top:513px;font-size:16px;line-height:19px;font-weight:400;color:#000;">100.0%</div>
<svg style="position:absolute;left:0;top:401.5px" width="1921" height="8"><path d="M1794.30 4.6 C1795.30 1.2 1796.90 1.2 1798.00 3.2 S1800.90 5.4 1801.90 1.8 M1803.50 4.6 C1804.50 1.2 1806.10 1.2 1807.20 3.2 S1810.10 5.4 1811.10 1.8 M1812.70 4.6 C1813.70 1.2 1815.30 1.2 1816.40 3.2 S1819.30 5.4 1820.30 1.8" fill="none" stroke="#000" stroke-width="1.35"/></svg>
<div class="t" style="left:1221.2px;width:600px;text-align:right;top:421px;font-size:16px;line-height:19px;font-weight:400;color:#000;">1.000</div>
<div class="t" style="left:1215.7px;width:600px;text-align:right;top:444px;font-size:16px;line-height:19px;font-weight:400;color:#000;">12</div>
<svg style="position:absolute;left:0;top:470.5px" width="1921" height="8"><path d="M1803.50 4.6 C1804.50 1.2 1806.10 1.2 1807.20 3.2 S1810.10 5.4 1811.10 1.8 M1812.70 4.6 C1813.70 1.2 1815.30 1.2 1816.40 3.2 S1819.30 5.4 1820.30 1.8" fill="none" stroke="#000" stroke-width="1.35"/></svg>
<div class="t" style="left:1221.2px;width:600px;text-align:right;top:490px;font-size:16px;line-height:19px;font-weight:400;color:#000;">116.0%</div>
<div class="t" style="left:1221.2px;width:600px;text-align:right;top:513px;font-size:16px;line-height:19px;font-weight:400;color:#000;">100.0%</div>
<svg style="position:absolute;left:0;top:401.5px" width="1921" height="8"><path d="M1901.30 4.6 C1902.30 1.2 1903.90 1.2 1905.00 3.2 S1907.90 5.4 1908.90 1.8 M1910.50 4.6 C1911.50 1.2 1913.10 1.2 1914.20 3.2 S1917.10 5.4 1918.10 1.8 M1919.70 4.6 C1920.70 1.2 1922.30 1.2 1923.40 3.2 S1926.30 5.4 1927.30 1.8" fill="none" stroke="#000" stroke-width="1.35"/></svg>
<div class="t" style="left:1328.2px;width:600px;text-align:right;top:421px;font-size:16px;line-height:19px;font-weight:400;color:#000;">1.000</div>
<div class="t" style="left:1322.7px;width:600px;text-align:right;top:444px;font-size:16px;line-height:19px;font-weight:400;color:#000;">12</div>
<svg style="position:absolute;left:0;top:470.5px" width="1921" height="8"><path d="M1910.50 4.6 C1911.50 1.2 1913.10 1.2 1914.20 3.2 S1917.10 5.4 1918.10 1.8 M1919.70 4.6 C1920.70 1.2 1922.30 1.2 1923.40 3.2 S1926.30 5.4 1927.30 1.8" fill="none" stroke="#000" stroke-width="1.35"/></svg>
<div class="t" style="left:1328.2px;width:600px;text-align:right;top:490px;font-size:16px;line-height:19px;font-weight:400;color:#000;">118.3%</div>
<div class="t" style="left:1328.2px;width:600px;text-align:right;top:513px;font-size:16px;line-height:19px;font-weight:400;color:#000;">100.0%</div>
<div class="t" style="left:-80.5px;width:600px;text-align:right;top:582px;font-size:16.2px;line-height:19px;font-weight:400;color:#000;letter-spacing:0.3px;">Headcount</div>
<div class="t" style="left:41.200000000000045px;width:600px;text-align:right;top:582px;font-size:16.2px;line-height:19px;font-weight:400;color:#000;">Fixed annual</div>
<div class="t" style="left:41.200000000000045px;width:600px;text-align:right;top:605px;font-size:16.2px;line-height:19px;font-weight:400;color:#000;">salary</div>
<div class="t" style="left:163.20000000000005px;width:600px;text-align:right;top:582px;font-size:16.2px;line-height:19px;font-weight:400;color:#000;">Stage when</div>
<div class="t" style="left:163.20000000000005px;width:600px;text-align:right;top:605px;font-size:16.2px;line-height:19px;font-weight:400;color:#000;">hired</div>
<div style="left:69px;top:650px;width:698px;height:115px;background:#DCE6F1;"></div>
<div style="left:68px;top:649px;width:699px;height:1px;background-image:linear-gradient(to right,#0E3470 50%,#FFF 50%);background-size:4px 1px;background-position:2px 0;"></div>
<div style="left:68px;top:672px;width:699px;height:1px;background-image:linear-gradient(to right,#0E3470 50%,#FFF 50%);background-size:4px 1px;background-position:3px 0;"></div>
<div style="left:68px;top:695px;width:699px;height:1px;background-image:linear-gradient(to right,#0E3470 50%,#FFF 50%);background-size:4px 1px;background-position:0px 0;"></div>
<div style="left:68px;top:718px;width:699px;height:1px;background-image:linear-gradient(to right,#0E3470 50%,#FFF 50%);background-size:4px 1px;background-position:1px 0;"></div>
<div style="left:68px;top:741px;width:699px;height:1px;background-image:linear-gradient(to right,#0E3470 50%,#FFF 50%);background-size:4px 1px;background-position:2px 0;"></div>
<div style="left:68px;top:764px;width:699px;height:1px;background-image:linear-gradient(to right,#0E3470 50%,#FFF 50%);background-size:4px 1px;background-position:3px 0;"></div>
<div style="left:68px;top:649px;width:1px;height:116px;background-image:linear-gradient(to bottom,#0E3470 50%,#FFF 50%);background-size:1px 4px;background-position:0 3px;"></div>
<div style="left:400px;top:649px;width:1px;height:116px;background-image:linear-gradient(to bottom,#0E3470 50%,#FFF 50%);background-size:1px 4px;background-position:0 3px;"></div>
<div style="left:522px;top:649px;width:1px;height:116px;background-image:linear-gradient(to bottom,#0E3470 50%,#FFF 50%);background-size:1px 4px;background-position:0 1px;"></div>
<div style="left:644px;top:649px;width:1px;height:116px;background-image:linear-gradient(to bottom,#0E3470 50%,#FFF 50%);background-size:1px 4px;background-position:0 3px;"></div>
<div style="left:766px;top:649px;width:1px;height:116px;background-image:linear-gradient(to bottom,#0E3470 50%,#FFF 50%);background-size:1px 4px;background-position:0 1px;"></div>
<div style="left:69px;top:811px;width:698px;height:115px;background:#DCE6F1;"></div>
<div style="left:68px;top:810px;width:699px;height:1px;background-image:linear-gradient(to right,#0E3470 50%,#FFF 50%);background-size:4px 1px;background-position:1px 0;"></div>
<div style="left:68px;top:833px;width:699px;height:1px;background-image:linear-gradient(to right,#0E3470 50%,#FFF 50%);background-size:4px 1px;background-position:2px 0;"></div>
<div style="left:68px;top:856px;width:699px;height:1px;background-image:linear-gradient(to right,#0E3470 50%,#FFF 50%);background-size:4px 1px;background-position:3px 0;"></div>
<div style="left:68px;top:879px;width:699px;height:1px;background-image:linear-gradient(to right,#0E3470 50%,#FFF 50%);background-size:4px 1px;background-position:0px 0;"></div>
<div style="left:68px;top:902px;width:699px;height:1px;background-image:linear-gradient(to right,#0E3470 50%,#FFF 50%);background-size:4px 1px;background-position:1px 0;"></div>
<div style="left:68px;top:925px;width:699px;height:1px;background-image:linear-gradient(to right,#0E3470 50%,#FFF 50%);background-size:4px 1px;background-position:2px 0;"></div>
<div style="left:68px;top:810px;width:1px;height:116px;background-image:linear-gradient(to bottom,#0E3470 50%,#FFF 50%);background-size:1px 4px;background-position:0 2px;"></div>
<div style="left:400px;top:810px;width:1px;height:116px;background-image:linear-gradient(to bottom,#0E3470 50%,#FFF 50%);background-size:1px 4px;background-position:0 2px;"></div>
<div style="left:522px;top:810px;width:1px;height:116px;background-image:linear-gradient(to bottom,#0E3470 50%,#FFF 50%);background-size:1px 4px;background-position:0 0px;"></div>
<div style="left:644px;top:810px;width:1px;height:116px;background-image:linear-gradient(to bottom,#0E3470 50%,#FFF 50%);background-size:1px 4px;background-position:0 2px;"></div>
<div style="left:766px;top:810px;width:1px;height:116px;background-image:linear-gradient(to bottom,#0E3470 50%,#FFF 50%);background-size:1px 4px;background-position:0 0px;"></div>
<div class="t" style="left:83.5px;top:630px;font-size:15.6px;line-height:19px;font-weight:700;color:#000;letter-spacing:0.15px;">Administration</div>
<div class="t" style="left:-80.79999999999995px;width:600px;text-align:right;top:630px;font-size:16px;line-height:19px;font-weight:700;color:#000;">1</div>
<svg style="position:absolute;left:815px;top:626.6px" width="30" height="24" viewBox="0 0 30 24"><polygon points="8,13.5 10.35,11.1 13.5,14.5 19.15,6.1 21.9,8.3 13.5,19.9" fill="#6FA792" stroke="#3D7A62" stroke-width="1.1" stroke-linejoin="round"/></svg>
<div class="t" style="left:601.9px;width:600px;text-align:center;top:630px;font-size:15.6px;line-height:19px;font-weight:700;color:#000;letter-spacing:-0.2px;">USD</div>
<div class="t" style="left:459.04999999999995px;width:600px;text-align:right;top:630px;font-size:15.6px;line-height:19px;font-weight:700;color:#000;letter-spacing:0.55px;">(546,036)</div>
<div class="t" style="left:579.75px;width:600px;text-align:right;top:630px;font-size:15.6px;line-height:19px;font-weight:700;color:#000;letter-spacing:0.55px;">(38,247)</div>
<div class="t" style="left:686.75px;width:600px;text-align:right;top:630px;font-size:15.6px;line-height:19px;font-weight:700;color:#000;letter-spacing:0.55px;">(52,056)</div>
<div class="t" style="left:793.75px;width:600px;text-align:right;top:630px;font-size:15.6px;line-height:19px;font-weight:700;color:#000;letter-spacing:0.55px;">(53,097)</div>
<div class="t" style="left:900.75px;width:600px;text-align:right;top:630px;font-size:15.6px;line-height:19px;font-weight:700;color:#000;letter-spacing:0.55px;">(54,159)</div>
<div class="t" style="left:1007.75px;width:600px;text-align:right;top:630px;font-size:15.6px;line-height:19px;font-weight:700;color:#000;letter-spacing:0.55px;">(55,242)</div>
<div class="t" style="left:1114.75px;width:600px;text-align:right;top:630px;font-size:15.6px;line-height:19px;font-weight:700;color:#000;letter-spacing:0.55px;">(56,347)</div>
<div class="t" style="left:1221.75px;width:600px;text-align:right;top:630px;font-size:15.6px;line-height:19px;font-weight:700;color:#000;letter-spacing:0.55px;">(57,474)</div>
<div class="t" style="left:1328.75px;width:600px;text-align:right;top:630px;font-size:15.6px;line-height:19px;font-weight:700;color:#000;letter-spacing:0.55px;">(58,623)</div>
<div class="t" style="left:83.5px;top:653px;font-size:16.2px;line-height:19px;font-weight:400;color:#2F5B91;letter-spacing:0.3px;">Reeptionist / administrator</div>
<div class="t" style="left:-80.79999999999995px;width:600px;text-align:right;top:653px;font-size:16px;line-height:19px;font-weight:400;color:#2F5B91;">1</div>
<div class="t" style="left:41.200000000000045px;width:600px;text-align:right;top:653px;font-size:16px;line-height:19px;font-weight:400;color:#2F5B91;">50,000</div>
<div class="t" style="left:405.5px;width:600px;text-align:center;top:653px;font-size:16px;line-height:19px;font-weight:400;color:#2F5B91;">Ramp-up</div>
<div class="t" style="left:480px;width:600px;text-align:center;top:653px;font-size:16px;line-height:19px;font-weight:400;color:#000;">1</div>
<svg style="position:absolute;left:815px;top:649.6px" width="30" height="24" viewBox="0 0 30 24"><polygon points="8,13.5 10.35,11.1 13.5,14.5 19.15,6.1 21.9,8.3 13.5,19.9" fill="#6FA792" stroke="#3D7A62" stroke-width="1.1" stroke-linejoin="round"/></svg>
<div class="t" style="left:601.9px;width:600px;text-align:center;top:654px;font-size:15.4px;line-height:18px;font-weight:400;color:#000;letter-spacing:-0.2px;">USD</div>
<div class="t" style="left:458.5px;width:600px;text-align:right;top:653px;font-size:15.8px;line-height:19px;font-weight:400;color:#000;">(546,036)</div>
<div class="t" style="left:579.2px;width:600px;text-align:right;top:653px;font-size:16px;line-height:19px;font-weight:400;color:#000;">(38,247)</div>
<div class="t" style="left:686.2px;width:600px;text-align:right;top:653px;font-size:16px;line-height:19px;font-weight:400;color:#000;">(52,056)</div>
<div class="t" style="left:793.2px;width:600px;text-align:right;top:653px;font-size:16px;line-height:19px;font-weight:400;color:#000;">(53,097)</div>
<div class="t" style="left:900.2px;width:600px;text-align:right;top:653px;font-size:16px;line-height:19px;font-weight:400;color:#000;">(54,159)</div>
<div class="t" style="left:1007.2px;width:600px;text-align:right;top:653px;font-size:16px;line-height:19px;font-weight:400;color:#000;">(55,242)</div>
<div class="t" style="left:1114.2px;width:600px;text-align:right;top:653px;font-size:16px;line-height:19px;font-weight:400;color:#000;">(56,347)</div>
<div class="t" style="left:1221.2px;width:600px;text-align:right;top:653px;font-size:16px;line-height:19px;font-weight:400;color:#000;">(57,474)</div>
<div class="t" style="left:1328.2px;width:600px;text-align:right;top:653px;font-size:16px;line-height:19px;font-weight:400;color:#000;">(58,623)</div>
<div class="t" style="left:83.5px;top:676px;font-size:16.2px;line-height:19px;font-weight:400;color:#2F5B91;">[...]</div>
<div class="t" style="left:480px;width:600px;text-align:center;top:676px;font-size:16px;line-height:19px;font-weight:400;color:#000;">-</div>
<svg style="position:absolute;left:815px;top:672.6px" width="30" height="24" viewBox="0 0 30 24"><polygon points="8,13.5 10.35,11.1 13.5,14.5 19.15,6.1 21.9,8.3 13.5,19.9" fill="#6FA792" stroke="#3D7A62" stroke-width="1.1" stroke-linejoin="round"/></svg>
<div class="t" style="left:601.9px;width:600px;text-align:center;top:677px;font-size:15.4px;line-height:18px;font-weight:400;color:#000;letter-spacing:-0.2px;">USD</div>
<div class="t" style="left:454px;width:600px;text-align:right;top:676px;font-size:16px;line-height:19px;font-weight:400;color:#000;">-</div>
<div class="t" style="left:573.7px;width:600px;text-align:right;top:676px;font-size:16px;line-height:19px;font-weight:400;color:#000;">-</div>
<div class="t" style="left:680.7px;width:600px;text-align:right;top:676px;font-size:16px;line-height:19px;font-weight:400;color:#000;">-</div>
<div class="t" style="left:787.7px;width:600px;text-align:right;top:676px;font-size:16px;line-height:19px;font-weight:400;color:#000;">-</div>
<div class="t" style="left:894.7px;width:600px;text-align:right;top:676px;font-size:16px;line-height:19px;font-weight:400;color:#000;">-</div>
<div class="t" style="left:1001.7px;width:600px;text-align:right;top:676px;font-size:16px;line-height:19px;font-weight:400;color:#000;">-</div>
<div class="t" style="left:1108.7px;width:600px;text-align:right;top:676px;font-size:16px;line-height:19px;font-weight:400;color:#000;">-</div>
<div class="t" style="left:1215.7px;width:600px;text-align:right;top:676px;font-size:16px;line-height:19px;font-weight:400;color:#000;">-</div>
<div class="t" style="left:1322.7px;width:600px;text-align:right;top:676px;font-size:16px;line-height:19px;font-weight:400;color:#000;">-</div>
<div class="t" style="left:83.5px;top:699px;font-size:16.2px;line-height:19px;font-weight:400;color:#2F5B91;">[...]</div>
<div class="t" style="left:480px;width:600px;text-align:center;top:699px;font-size:16px;line-height:19px;font-weight:400;color:#000;">-</div>
<svg style="position:absolute;left:815px;top:695.6px" width="30" height="24" viewBox="0 0 30 24"><polygon points="8,13.5 10.35,11.1 13.5,14.5 19.15,6.1 21.9,8.3 13.5,19.9" fill="#6FA792" stroke="#3D7A62" stroke-width="1.1" stroke-linejoin="round"/></svg>
<div class="t" style="left:601.9px;width:600px;text-align:center;top:700px;font-size:15.4px;line-height:18px;font-weight:400;color:#000;letter-spacing:-0.2px;">USD</div>
<div class="t" style="left:454px;width:600px;text-align:right;top:699px;font-size:16px;line-height:19px;font-weight:400;color:#000;">-</div>
<div class="t" style="left:573.7px;width:600px;text-align:right;top:699px;font-size:16px;line-height:19px;font-weight:400;color:#000;">-</div>
<div class="t" style="left:680.7px;width:600px;text-align:right;top:699px;font-size:16px;line-height:19px;font-weight:400;color:#000;">-</div>
<div class="t" style="left:787.7px;width:600px;text-align:right;top:699px;font-size:16px;line-height:19px;font-weight:400;color:#000;">-</div>
<div class="t" style="left:894.7px;width:600px;text-align:right;top:699px;font-size:16px;line-height:19px;font-weight:400;color:#000;">-</div>
<div class="t" style="left:1001.7px;width:600px;text-align:right;top:699px;font-size:16px;line-height:19px;font-weight:400;color:#000;">-</div>
<div class="t" style="left:1108.7px;width:600px;text-align:right;top:699px;font-size:16px;line-height:19px;font-weight:400;color:#000;">-</div>
<div class="t" style="left:1215.7px;width:600px;text-align:right;top:699px;font-size:16px;line-height:19px;font-weight:400;color:#000;">-</div>
<div class="t" style="left:1322.7px;width:600px;text-align:right;top:699px;font-size:16px;line-height:19px;font-weight:400;color:#000;">-</div>
<div class="t" style="left:83.5px;top:722px;font-size:16.2px;line-height:19px;font-weight:400;color:#2F5B91;">[...]</div>
<div class="t" style="left:480px;width:600px;text-align:center;top:722px;font-size:16px;line-height:19px;font-weight:400;color:#000;">-</div>
<svg style="position:absolute;left:815px;top:718.6px" width="30" height="24" viewBox="0 0 30 24"><polygon points="8,13.5 10.35,11.1 13.5,14.5 19.15,6.1 21.9,8.3 13.5,19.9" fill="#6FA792" stroke="#3D7A62" stroke-width="1.1" stroke-linejoin="round"/></svg>
<div class="t" style="left:601.9px;width:600px;text-align:center;top:723px;font-size:15.4px;line-height:18px;font-weight:400;color:#000;letter-spacing:-0.2px;">USD</div>
<div class="t" style="left:454px;width:600px;text-align:right;top:722px;font-size:16px;line-height:19px;font-weight:400;color:#000;">-</div>
<div class="t" style="left:573.7px;width:600px;text-align:right;top:722px;font-size:16px;line-height:19px;font-weight:400;color:#000;">-</div>
<div class="t" style="left:680.7px;width:600px;text-align:right;top:722px;font-size:16px;line-height:19px;font-weight:400;color:#000;">-</div>
<div class="t" style="left:787.7px;width:600px;text-align:right;top:722px;font-size:16px;line-height:19px;font-weight:400;color:#000;">-</div>
<div class="t" style="left:894.7px;width:600px;text-align:right;top:722px;font-size:16px;line-height:19px;font-weight:400;color:#000;">-</div>
<div class="t" style="left:1001.7px;width:600px;text-align:right;top:722px;font-size:16px;line-height:19px;font-weight:400;color:#000;">-</div>
<div class="t" style="left:1108.7px;width:600px;text-align:right;top:722px;font-size:16px;line-height:19px;font-weight:400;color:#000;">-</div>
<div class="t" style="left:1215.7px;width:600px;text-align:right;top:722px;font-size:16px;line-height:19px;font-weight:400;color:#000;">-</div>
<div class="t" style="left:1322.7px;width:600px;text-align:right;top:722px;font-size:16px;line-height:19px;font-weight:400;color:#000;">-</div>
<div class="t" style="left:83.5px;top:745px;font-size:16.2px;line-height:19px;font-weight:400;color:#2F5B91;">[...]</div>
<div class="t" style="left:480px;width:600px;text-align:center;top:745px;font-size:16px;line-height:19px;font-weight:400;color:#000;">-</div>
<svg style="position:absolute;left:815px;top:741.6px" width="30" height="24" viewBox="0 0 30 24"><polygon points="8,13.5 10.35,11.1 13.5,14.5 19.15,6.1 21.9,8.3 13.5,19.9" fill="#6FA792" stroke="#3D7A62" stroke-width="1.1" stroke-linejoin="round"/></svg>
<div class="t" style="left:601.9px;width:600px;text-align:center;top:746px;font-size:15.4px;line-height:18px;font-weight:400;color:#000;letter-spacing:-0.2px;">USD</div>
<div class="t" style="left:454px;width:600px;text-align:right;top:745px;font-size:16px;line-height:19px;font-weight:400;color:#000;">-</div>
<div class="t" style="left:573.7px;width:600px;text-align:right;top:745px;font-size:16px;line-height:19px;font-weight:400;color:#000;">-</div>
<div class="t" style="left:680.7px;width:600px;text-align:right;top:745px;font-size:16px;line-height:19px;font-weight:400;color:#000;">-</div>
<div class="t" style="left:787.7px;width:600px;text-align:right;top:745px;font-size:16px;line-height:19px;font-weight:400;color:#000;">-</div>
<div class="t" style="left:894.7px;width:600px;text-align:right;top:745px;font-size:16px;line-height:19px;font-weight:400;color:#000;">-</div>
<div class="t" style="left:1001.7px;width:600px;text-align:right;top:745px;font-size:16px;line-height:19px;font-weight:400;color:#000;">-</div>
<div class="t" style="left:1108.7px;width:600px;text-align:right;top:745px;font-size:16px;line-height:19px;font-weight:400;color:#000;">-</div>
<div class="t" style="left:1215.7px;width:600px;text-align:right;top:745px;font-size:16px;line-height:19px;font-weight:400;color:#000;">-</div>
<div class="t" style="left:1322.7px;width:600px;text-align:right;top:745px;font-size:16px;line-height:19px;font-weight:400;color:#000;">-</div>
<div class="t" style="left:83.5px;top:791px;font-size:15.6px;line-height:19px;font-weight:700;color:#000;letter-spacing:0.4px;">Staff</div>
<div class="t" style="left:-80.79999999999995px;width:600px;text-align:right;top:791px;font-size:16px;line-height:19px;font-weight:700;color:#000;">8</div>
<svg style="position:absolute;left:815px;top:787.6px" width="30" height="24" viewBox="0 0 30 24"><polygon points="8,13.5 10.35,11.1 13.5,14.5 19.15,6.1 21.9,8.3 13.5,19.9" fill="#6FA792" stroke="#3D7A62" stroke-width="1.1" stroke-linejoin="round"/></svg>
<div class="t" style="left:601.9px;width:600px;text-align:center;top:791px;font-size:15.6px;line-height:19px;font-weight:700;color:#000;letter-spacing:-0.2px;">USD</div>
<div class="t" style="left:459.04999999999995px;width:600px;text-align:right;top:791px;font-size:15.6px;line-height:19px;font-weight:700;color:#000;letter-spacing:0.55px;">(3,440,571)</div>
<div class="t" style="left:579.75px;width:600px;text-align:right;top:791px;font-size:15.6px;line-height:19px;font-weight:700;color:#000;letter-spacing:0.55px;">(190,720)</div>
<div class="t" style="left:686.75px;width:600px;text-align:right;top:791px;font-size:15.6px;line-height:19px;font-weight:700;color:#000;letter-spacing:0.55px;">(333,160)</div>
<div class="t" style="left:793.75px;width:600px;text-align:right;top:791px;font-size:15.6px;line-height:19px;font-weight:700;color:#000;letter-spacing:0.55px;">(339,823)</div>
<div class="t" style="left:900.75px;width:600px;text-align:right;top:791px;font-size:15.6px;line-height:19px;font-weight:700;color:#000;letter-spacing:0.55px;">(346,620)</div>
<div class="t" style="left:1007.75px;width:600px;text-align:right;top:791px;font-size:15.6px;line-height:19px;font-weight:700;color:#000;letter-spacing:0.55px;">(353,552)</div>
<div class="t" style="left:1114.75px;width:600px;text-align:right;top:791px;font-size:15.6px;line-height:19px;font-weight:700;color:#000;letter-spacing:0.55px;">(360,623)</div>
<div class="t" style="left:1221.75px;width:600px;text-align:right;top:791px;font-size:15.6px;line-height:19px;font-weight:700;color:#000;letter-spacing:0.55px;">(367,835)</div>
<div class="t" style="left:1328.75px;width:600px;text-align:right;top:791px;font-size:15.6px;line-height:19px;font-weight:700;color:#000;letter-spacing:0.55px;">(375,192)</div>
<div class="t" style="left:83.5px;top:814px;font-size:16.2px;line-height:19px;font-weight:400;color:#2F5B91;letter-spacing:0.4px;">Attendatnts</div>
<div class="t" style="left:-80.79999999999995px;width:600px;text-align:right;top:814px;font-size:16px;line-height:19px;font-weight:400;color:#2F5B91;">2</div>
<div class="t" style="left:41.200000000000045px;width:600px;text-align:right;top:814px;font-size:16px;line-height:19px;font-weight:400;color:#2F5B91;">40,000</div>
<div class="t" style="left:405.5px;width:600px;text-align:center;top:814px;font-size:16px;line-height:19px;font-weight:400;color:#2F5B91;">Ramp-up</div>
<div class="t" style="left:480px;width:600px;text-align:center;top:814px;font-size:16px;line-height:19px;font-weight:400;color:#000;">1</div>
<svg style="position:absolute;left:815px;top:810.6px" width="30" height="24" viewBox="0 0 30 24"><polygon points="8,13.5 10.35,11.1 13.5,14.5 19.15,6.1 21.9,8.3 13.5,19.9" fill="#6FA792" stroke="#3D7A62" stroke-width="1.1" stroke-linejoin="round"/></svg>
<div class="t" style="left:601.9px;width:600px;text-align:center;top:815px;font-size:15.4px;line-height:18px;font-weight:400;color:#000;letter-spacing:-0.2px;">USD</div>
<div class="t" style="left:458.5px;width:600px;text-align:right;top:814px;font-size:15.8px;line-height:19px;font-weight:400;color:#000;">(873,658)</div>
<div class="t" style="left:579.2px;width:600px;text-align:right;top:814px;font-size:16px;line-height:19px;font-weight:400;color:#000;">(61,195)</div>
<div class="t" style="left:686.2px;width:600px;text-align:right;top:814px;font-size:16px;line-height:19px;font-weight:400;color:#000;">(83,290)</div>
<div class="t" style="left:793.2px;width:600px;text-align:right;top:814px;font-size:16px;line-height:19px;font-weight:400;color:#000;">(84,956)</div>
<div class="t" style="left:900.2px;width:600px;text-align:right;top:814px;font-size:16px;line-height:19px;font-weight:400;color:#000;">(86,655)</div>
<div class="t" style="left:1007.2px;width:600px;text-align:right;top:814px;font-size:16px;line-height:19px;font-weight:400;color:#000;">(88,388)</div>
<div class="t" style="left:1114.2px;width:600px;text-align:right;top:814px;font-size:16px;line-height:19px;font-weight:400;color:#000;">(90,156)</div>
<div class="t" style="left:1221.2px;width:600px;text-align:right;top:814px;font-size:16px;line-height:19px;font-weight:400;color:#000;">(91,959)</div>
<div class="t" style="left:1328.2px;width:600px;text-align:right;top:814px;font-size:16px;line-height:19px;font-weight:400;color:#000;">(93,798)</div>
<div class="t" style="left:83.5px;top:837px;font-size:16.2px;line-height:19px;font-weight:400;color:#2F5B91;letter-spacing:0.4px;">Attendatnts</div>
<div class="t" style="left:-80.79999999999995px;width:600px;text-align:right;top:837px;font-size:16px;line-height:19px;font-weight:400;color:#2F5B91;">2</div>
<div class="t" style="left:41.200000000000045px;width:600px;text-align:right;top:837px;font-size:16px;line-height:19px;font-weight:400;color:#2F5B91;">40,000</div>
<div class="t" style="left:405.5px;width:600px;text-align:center;top:837px;font-size:16px;line-height:19px;font-weight:400;color:#2F5B91;">Mature</div>
<div class="t" style="left:480px;width:600px;text-align:center;top:837px;font-size:16px;line-height:19px;font-weight:400;color:#000;">5</div>
<svg style="position:absolute;left:815px;top:833.6px" width="30" height="24" viewBox="0 0 30 24"><polygon points="8,13.5 10.35,11.1 13.5,14.5 19.15,6.1 21.9,8.3 13.5,19.9" fill="#6FA792" stroke="#3D7A62" stroke-width="1.1" stroke-linejoin="round"/></svg>
<div class="t" style="left:601.9px;width:600px;text-align:center;top:838px;font-size:15.4px;line-height:18px;font-weight:400;color:#000;letter-spacing:-0.2px;">USD</div>
<div class="t" style="left:458.5px;width:600px;text-align:right;top:837px;font-size:15.8px;line-height:19px;font-weight:400;color:#000;">(846,627)</div>
<div class="t" style="left:579.2px;width:600px;text-align:right;top:837px;font-size:16px;line-height:19px;font-weight:400;color:#000;">(34,165)</div>
<div class="t" style="left:686.2px;width:600px;text-align:right;top:837px;font-size:16px;line-height:19px;font-weight:400;color:#000;">(83,290)</div>
<div class="t" style="left:793.2px;width:600px;text-align:right;top:837px;font-size:16px;line-height:19px;font-weight:400;color:#000;">(84,956)</div>
<div class="t" style="left:900.2px;width:600px;text-align:right;top:837px;font-size:16px;line-height:19px;font-weight:400;color:#000;">(86,655)</div>
<div class="t" style="left:1007.2px;width:600px;text-align:right;top:837px;font-size:16px;line-height:19px;font-weight:400;color:#000;">(88,388)</div>
<div class="t" style="left:1114.2px;width:600px;text-align:right;top:837px;font-size:16px;line-height:19px;font-weight:400;color:#000;">(90,156)</div>
<div class="t" style="left:1221.2px;width:600px;text-align:right;top:837px;font-size:16px;line-height:19px;font-weight:400;color:#000;">(91,959)</div>
<div class="t" style="left:1328.2px;width:600px;text-align:right;top:837px;font-size:16px;line-height:19px;font-weight:400;color:#000;">(93,798)</div>
<div class="t" style="left:83.5px;top:860px;font-size:16.2px;line-height:19px;font-weight:400;color:#2F5B91;">Courriers</div>
<div class="t" style="left:-80.79999999999995px;width:600px;text-align:right;top:860px;font-size:16px;line-height:19px;font-weight:400;color:#2F5B91;">2</div>
<div class="t" style="left:41.200000000000045px;width:600px;text-align:right;top:860px;font-size:16px;line-height:19px;font-weight:400;color:#2F5B91;">40,000</div>
<div class="t" style="left:405.5px;width:600px;text-align:center;top:860px;font-size:16px;line-height:19px;font-weight:400;color:#2F5B91;">Ramp-up</div>
<div class="t" style="left:480px;width:600px;text-align:center;top:860px;font-size:16px;line-height:19px;font-weight:400;color:#000;">1</div>
<svg style="position:absolute;left:815px;top:856.6px" width="30" height="24" viewBox="0 0 30 24"><polygon points="8,13.5 10.35,11.1 13.5,14.5 19.15,6.1 21.9,8.3 13.5,19.9" fill="#6FA792" stroke="#3D7A62" stroke-width="1.1" stroke-linejoin="round"/></svg>
<div class="t" style="left:601.9px;width:600px;text-align:center;top:861px;font-size:15.4px;line-height:18px;font-weight:400;color:#000;letter-spacing:-0.2px;">USD</div>
<div class="t" style="left:458.5px;width:600px;text-align:right;top:860px;font-size:15.8px;line-height:19px;font-weight:400;color:#000;">(873,658)</div>
<div class="t" style="left:579.2px;width:600px;text-align:right;top:860px;font-size:16px;line-height:19px;font-weight:400;color:#000;">(61,195)</div>
<div class="t" style="left:686.2px;width:600px;text-align:right;top:860px;font-size:16px;line-height:19px;font-weight:400;color:#000;">(83,290)</div>
<div class="t" style="left:793.2px;width:600px;text-align:right;top:860px;font-size:16px;line-height:19px;font-weight:400;color:#000;">(84,956)</div>
<div class="t" style="left:900.2px;width:600px;text-align:right;top:860px;font-size:16px;line-height:19px;font-weight:400;color:#000;">(86,655)</div>
<div class="t" style="left:1007.2px;width:600px;text-align:right;top:860px;font-size:16px;line-height:19px;font-weight:400;color:#000;">(88,388)</div>
<div class="t" style="left:1114.2px;width:600px;text-align:right;top:860px;font-size:16px;line-height:19px;font-weight:400;color:#000;">(90,156)</div>
<div class="t" style="left:1221.2px;width:600px;text-align:right;top:860px;font-size:16px;line-height:19px;font-weight:400;color:#000;">(91,959)</div>
<div class="t" style="left:1328.2px;width:600px;text-align:right;top:860px;font-size:16px;line-height:19px;font-weight:400;color:#000;">(93,798)</div>
<div class="t" style="left:83.5px;top:883px;font-size:16.2px;line-height:19px;font-weight:400;color:#2F5B91;">Courriers</div>
<div class="t" style="left:-80.79999999999995px;width:600px;text-align:right;top:883px;font-size:16px;line-height:19px;font-weight:400;color:#2F5B91;">2</div>
<div class="t" style="left:41.200000000000045px;width:600px;text-align:right;top:883px;font-size:16px;line-height:19px;font-weight:400;color:#2F5B91;">40,000</div>
<div class="t" style="left:405.5px;width:600px;text-align:center;top:883px;font-size:16px;line-height:19px;font-weight:400;color:#2F5B91;">Mature</div>
<div class="t" style="left:480px;width:600px;text-align:center;top:883px;font-size:16px;line-height:19px;font-weight:400;color:#000;">5</div>
<svg style="position:absolute;left:815px;top:879.6px" width="30" height="24" viewBox="0 0 30 24"><polygon points="8,13.5 10.35,11.1 13.5,14.5 19.15,6.1 21.9,8.3 13.5,19.9" fill="#6FA792" stroke="#3D7A62" stroke-width="1.1" stroke-linejoin="round"/></svg>
<div class="t" style="left:601.9px;width:600px;text-align:center;top:884px;font-size:15.4px;line-height:18px;font-weight:400;color:#000;letter-spacing:-0.2px;">USD</div>
<div class="t" style="left:458.5px;width:600px;text-align:right;top:883px;font-size:15.8px;line-height:19px;font-weight:400;color:#000;">(846,627)</div>
<div class="t" style="left:579.2px;width:600px;text-align:right;top:883px;font-size:16px;line-height:19px;font-weight:400;color:#000;">(34,165)</div>
<div class="t" style="left:686.2px;width:600px;text-align:right;top:883px;font-size:16px;line-height:19px;font-weight:400;color:#000;">(83,290)</div>
<div class="t" style="left:793.2px;width:600px;text-align:right;top:883px;font-size:16px;line-height:19px;font-weight:400;color:#000;">(84,956)</div>
<div class="t" style="left:900.2px;width:600px;text-align:right;top:883px;font-size:16px;line-height:19px;font-weight:400;color:#000;">(86,655)</div>
<div class="t" style="left:1007.2px;width:600px;text-align:right;top:883px;font-size:16px;line-height:19px;font-weight:400;color:#000;">(88,388)</div>
<div class="t" style="left:1114.2px;width:600px;text-align:right;top:883px;font-size:16px;line-height:19px;font-weight:400;color:#000;">(90,156)</div>
<div class="t" style="left:1221.2px;width:600px;text-align:right;top:883px;font-size:16px;line-height:19px;font-weight:400;color:#000;">(91,959)</div>
<div class="t" style="left:1328.2px;width:600px;text-align:right;top:883px;font-size:16px;line-height:19px;font-weight:400;color:#000;">(93,798)</div>
<div style="left:1895px;top:55px;width:26px;height:852px;background:#E6E6E6;"></div>
<!--SELECTION-->
<div style="left:32px;top:77px;width:38px;height:26px;border:2px solid #217346;"></div>
<div style="left:65px;top:98px;width:7px;height:7px;background:#FFF;"></div>
<div style="left:66px;top:99px;width:5px;height:5px;background:#217346;"></div>
<!--CHROME-->
<div style="left:1895px;top:0px;width:26px;height:966px;background:#E6E6E6;"></div>
<div style="left:1898px;top:8px;width:20px;height:898px;background:#F0F0F0;"></div>
<div style="left:1898px;top:8px;width:19px;height:19px;background:#FFF;border:1px solid #A0A0A0;"></div>
<svg style="position:absolute;left:1902px;top:13px" width="12" height="8"><polygon points="1,6.5 11,6.5 6,1" fill="#222"/></svg>
<div style="left:1898px;top:26px;width:19px;height:440px;background:#FFF;border:1px solid #A0A0A0;border-top:2px solid #A0A0A0;"></div>
<div style="left:1898px;top:887px;width:19px;height:19px;background:#FFF;border:1px solid #A0A0A0;"></div>
<svg style="position:absolute;left:1902px;top:893px" width="12" height="8"><polygon points="1,1 11,1 6,6.5" fill="#222"/></svg>
<div style="left:1920px;top:0px;width:1px;height:966px;background:#111111;"></div>
<div style="left:0px;top:907px;width:1919px;height:31px;background:#E6E6E6;"></div>
<div style="left:0px;top:906px;width:1894px;height:1px;background:#A6A6A6;"></div>
<svg style="position:absolute;left:29px;top:916px" width="10" height="14"><polygon points="1,7 7,1.5 7,12.5" fill="#1D6B3A"/></svg>
<svg style="position:absolute;left:61px;top:916px" width="10" height="14"><polygon points="7,7 1,1.5 1,12.5" fill="#1D6B3A"/></svg>
<div style="left:91px;top:925px;width:2px;height:2px;background:#1D6B3A;"></div>
<div style="left:96px;top:925px;width:2px;height:2px;background:#1D6B3A;"></div>
<div style="left:101px;top:925px;width:2px;height:2px;background:#1D6B3A;"></div>
<div style="left:112px;top:910px;width:1px;height:23px;background:#A0A0A0;"></div>
<div style="left:207px;top:910px;width:1px;height:23px;background:#A0A0A0;"></div>
<div style="left:297px;top:910px;width:1px;height:23px;background:#A0A0A0;"></div>
<div style="left:411px;top:910px;width:1px;height:23px;background:#A0A0A0;"></div>
<div style="left:529px;top:910px;width:1px;height:23px;background:#A0A0A0;"></div>
<div style="left:603px;top:910px;width:1px;height:23px;background:#A0A0A0;"></div>
<div style="left:687px;top:910px;width:1px;height:23px;background:#A0A0A0;"></div>
<div style="left:775px;top:910px;width:1px;height:23px;background:#A0A0A0;"></div>
<div style="left:883px;top:910px;width:1px;height:23px;background:#A0A0A0;"></div>
<div class="t" style="left:124.8px;top:908px;font-size:16.5px;line-height:24px;color:#484848;letter-spacing:0.56px;">Contents</div>
<div class="t" style="left:220px;top:908px;font-size:16.5px;line-height:24px;color:#484848;letter-spacing:0.43px;">Settings</div>
<div class="t" style="left:311.5px;top:908px;font-size:16.5px;line-height:24px;color:#484848;letter-spacing:0.02px;">Summary_f</div>
<div class="t" style="left:425.5px;top:908px;font-size:16.5px;line-height:24px;color:#484848;letter-spacing:-0.19px;">Summary_a</div>
<div class="t" style="left:541.7px;top:908px;font-size:16.5px;line-height:24px;color:#484848;letter-spacing:0.78px;">Inputs</div>
<div class="t" style="left:615.5px;top:908px;font-size:16.5px;line-height:24px;color:#484848;letter-spacing:-0.29px;">Capex_i</div>
<div class="t" style="left:701.3px;top:908px;font-size:16.5px;line-height:24px;color:#484848;letter-spacing:-0.44px;">Services</div>
<div class="t" style="left:788.8px;top:908px;font-size:16.5px;line-height:24px;color:#484848;letter-spacing:0.10px;">Economics</div>
<div class="t" style="left:895.7px;top:908px;font-size:16.5px;line-height:24px;color:#484848;letter-spacing:-0.28px;">Capex_c</div>
<div style="left:971px;top:906px;width:80px;height:29px;background:#FFF;border-left:1px solid #A6A6A6;border-right:1px solid #A6A6A6;"></div>
<div style="left:971px;top:933px;width:80px;height:2px;background:#217346;"></div>
<div class="t" style="left:983px;top:909px;font-size:16px;line-height:24px;font-weight:700;color:#217346;">Payroll</div>
<div class="t" style="left:1061px;top:908px;width:12px;overflow:hidden;font-size:16.5px;line-height:24px;color:#444;">W</div>
<div style="left:1083px;top:924px;width:2px;height:2px;background:#1D6B3A;"></div>
<div style="left:1088px;top:924px;width:2px;height:2px;background:#1D6B3A;"></div>
<div style="left:1093px;top:924px;width:2px;height:2px;background:#1D6B3A;"></div>
<svg style="position:absolute;left:1109px;top:912px" width="22" height="22"><circle cx="11" cy="11" r="9.5" fill="none" stroke="#777" stroke-width="1.2"/><path d="M6 11 H16 M11 6 V16" stroke="#555" stroke-width="1.5"/></svg>
<div style="left:1150px;top:916px;width:3px;height:3px;background:#B0B0B0;"></div>
<div style="left:1150px;top:921px;width:3px;height:3px;background:#B0B0B0;"></div>
<div style="left:1150px;top:926px;width:3px;height:3px;background:#B0B0B0;"></div>
<div style="left:1170px;top:913px;width:705px;height:19px;background:#F0F0F0;"></div>
<div style="left:1170px;top:913px;width:19px;height:19px;background:#FFF;border:1px solid #A0A0A0;"></div>
<svg style="position:absolute;left:1175px;top:916px" width="8" height="13"><polygon points="1.5,6.5 7,1 7,12" fill="#222"/></svg>
<div style="left:1188px;top:913px;width:42px;height:19px;background:#FFF;border:1px solid #A0A0A0;border-left:2px solid #A0A0A0;"></div>
<div style="left:1874px;top:913px;width:19px;height:19px;background:#FFF;border:1px solid #A0A0A0;"></div>
<svg style="position:absolute;left:1880px;top:916px" width="8" height="13"><polygon points="7,6.5 1.5,1 1.5,12" fill="#222"/></svg>
<div style="left:0px;top:938px;width:1919px;height:28px;background:#F3F3F3;"></div>
<div style="left:0px;top:938px;width:1919px;height:1px;background:#DADADA;"></div>
<div style="left:0px;top:965px;width:1919px;height:1px;background:#6E6E6E;"></div>
<div class="t" style="left:14px;top:944px;font-size:12.7px;line-height:18px;font-weight:400;color:#333;">Ready</div>
<div class="t" style="left:71px;top:944px;font-size:12.7px;line-height:18px;font-weight:400;color:#333;">Calculate</div>
<svg style="position:absolute;left:140px;top:938px" width="80" height="28" viewBox="0 0 80 28"><circle cx="13.3" cy="9.4" r="3.3" fill="#555"/><rect x="18.3" y="7.3" width="6.5" height="3.1" fill="#555"/><path d="M11.75 10.4 V20.1 H24.3 V10.4" fill="none" stroke="#555" stroke-width="1.1"/><path d="M16.9 12.5 h2 M20 12.5 h2 M13.8 15.5 h2 M16.9 15.5 h2 M20 15.5 h2 M13.8 18.3 h2 M16.9 18.3 h2 M20 18.3 h2" stroke="#555" stroke-width="1"/><path d="M54.6 7.3 A6.1 7.1 0 1 0 55.6 21.5" fill="none" stroke="#555" stroke-width="1.2" stroke-dasharray="3.2 1.4"/><path d="M56.5 6 V14.3 M54.2 12 L56.5 14.5 L58.8 12 M60 12.3 H64.6 M62.6 10.3 L64.8 12.3 L62.6 14.3" fill="none" stroke="#555" stroke-width="1.1"/><path d="M59 15.8 L66.8 22.8" stroke="#555" stroke-width="2.2" stroke-linecap="round"/><path d="M66.8 15.8 L59 23" stroke="#555" stroke-width="2" stroke-linecap="round"/></svg>
<div class="t" style="left:211px;top:944px;font-size:12.7px;line-height:18px;font-weight:700;color:#222;">Accessibility: Investigate</div>
<svg style="position:absolute;left:1405px;top:938px" width="34" height="28" viewBox="0 0 34 28"><rect x="11.2" y="5.1" width="18.7" height="12.6" rx="1.6" fill="#4F4F4F"/><rect x="15" y="21.4" width="4.7" height="1.6" fill="#4F4F4F"/><circle cx="24.5" cy="18.55" r="5.2" fill="#F3F3F3"/><g><rect x="23" y="12.9" width="3" height="2.6" transform="rotate(30 24.5 18.55)" fill="#4F4F4F" stroke="#F3F3F3" stroke-width="0.8"/><rect x="23" y="12.9" width="3" height="2.6" transform="rotate(90 24.5 18.55)" fill="#4F4F4F" stroke="#F3F3F3" stroke-width="0.8"/><rect x="23" y="12.9" width="3" height="2.6" transform="rotate(150 24.5 18.55)" fill="#4F4F4F" stroke="#F3F3F3" stroke-width="0.8"/><rect x="23" y="12.9" width="3" height="2.6" transform="rotate(210 24.5 18.55)" fill="#4F4F4F" stroke="#F3F3F3" stroke-width="0.8"/><rect x="23" y="12.9" width="3" height="2.6" transform="rotate(270 24.5 18.55)" fill="#4F4F4F" stroke="#F3F3F3" stroke-width="0.8"/><rect x="23" y="12.9" width="3" height="2.6" transform="rotate(330 24.5 18.55)" fill="#4F4F4F" stroke="#F3F3F3" stroke-width="0.8"/></g><circle cx="24.5" cy="18.55" r="4.1" fill="#4F4F4F"/><circle cx="24.5" cy="18.55" r="1.8" fill="#F3F3F3"/></svg>
<div class="t" style="left:1437.5px;top:944px;font-size:12.7px;line-height:18px;font-weight:400;color:#333;">Display Settings</div>
<div style="left:1554px;top:939px;width:50px;height:26px;background:#C6C6C6;"></div>
<svg style="position:absolute;left:1550px;top:938px" width="150" height="28" viewBox="0 0 150 28"><path d="M21.5 6.5 H36.5 V21.5 H21.5 Z M26.5 6.5 V21.5 M31.5 6.5 V21.5 M21.5 11.5 H36.5 M21.5 16.5 H36.5" fill="none" stroke="#5F5F5F" stroke-width="1.1"/><path d="M70.5 6.5 H86.5 V20.5 H70.5 Z M74.5 8.5 H82.5 V18.5 H74.5 Z M76.2 11.5 H80.9 M76.2 13.5 H80.9 M76.2 15.5 H80.9" fill="none" stroke="#5F5F5F" stroke-width="1.1"/><path d="M120.5 6.5 H136.5 V21.5 H120.5 Z M125.5 6.5 V15.5 M130.5 6.5 V15.5 H120.5" fill="none" stroke="#5F5F5F" stroke-width="1.1"/></svg>
<div style="left:1711px;top:951px;width:10px;height:1px;background:#444;"></div>
<div style="left:1727px;top:952px;width:125px;height:1px;background:#444;"></div>
<div style="left:1780px;top:945px;width:6px;height:15px;background:#444;"></div>
<div style="left:1789px;top:949px;width:1px;height:8px;background:#444;"></div>
<div style="left:1858px;top:951px;width:10px;height:1px;background:#444;"></div>
<div style="left:1862px;top:947px;width:1px;height:10px;background:#444;"></div>
<div class="t" style="left:1884px;top:944px;font-size:12.7px;line-height:18px;font-weight:400;color:#333;">90%</div>
</body></html>
